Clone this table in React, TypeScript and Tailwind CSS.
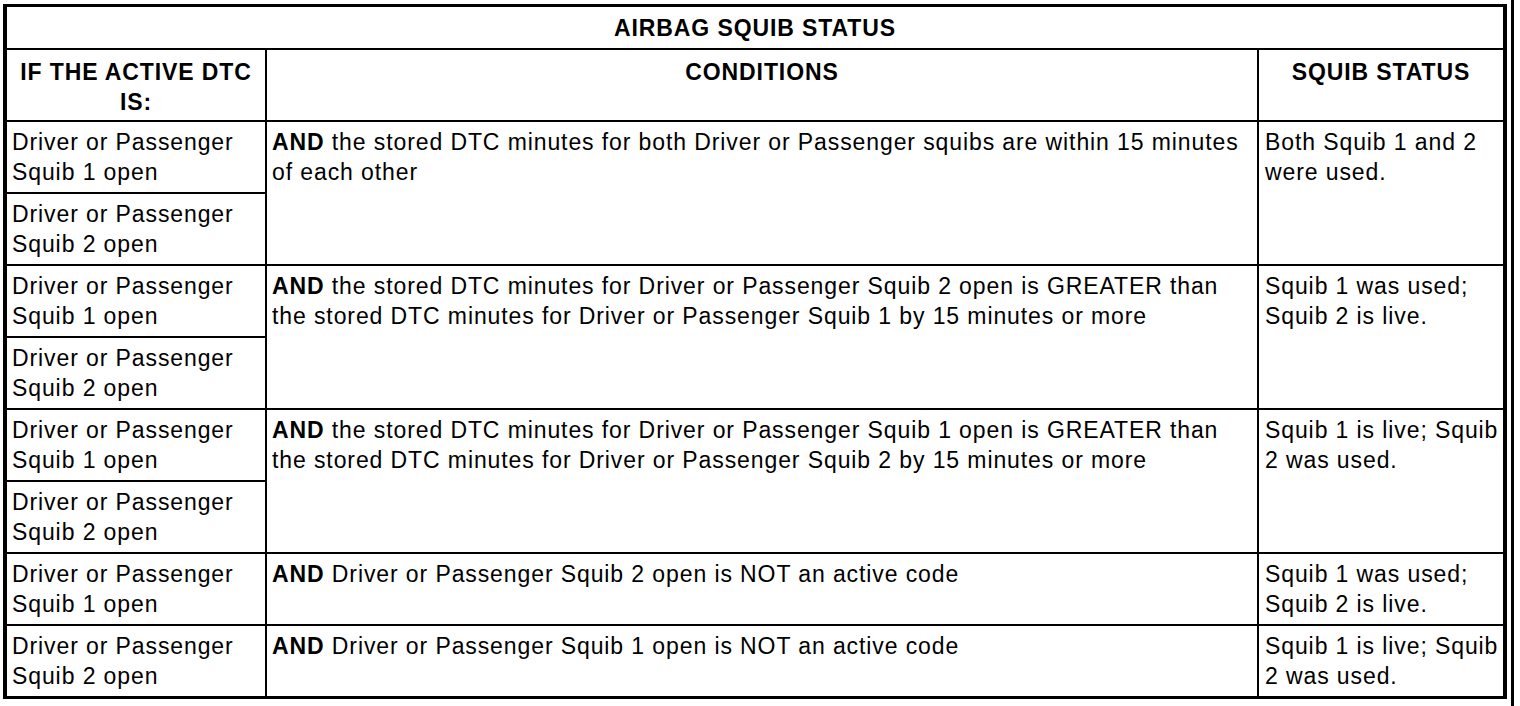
const font = { fontFamily: '"Liberation Sans", Arial, Helvetica, sans-serif' };

type Group = {
  dtcs: string[];
  condition: string[];
  status: string[];
};

const groups: Group[] = [
  {
    dtcs: ["1", "2"],
    condition: [
      "the stored DTC minutes for both Driver or Passenger squibs are within 15 minutes",
      "of each other",
    ],
    status: ["Both Squib 1 and 2", "were used."],
  },
  {
    dtcs: ["1", "2"],
    condition: [
      "the stored DTC minutes for Driver or Passenger Squib 2 open is GREATER than",
      "the stored DTC minutes for Driver or Passenger Squib 1 by 15 minutes or more",
    ],
    status: ["Squib 1 was used;", "Squib 2 is live."],
  },
  {
    dtcs: ["1", "2"],
    condition: [
      "the stored DTC minutes for Driver or Passenger Squib 1 open is GREATER than",
      "the stored DTC minutes for Driver or Passenger Squib 2 by 15 minutes or more",
    ],
    status: ["Squib 1 is live; Squib", "2 was used."],
  },
  {
    dtcs: ["1"],
    condition: ["Driver or Passenger Squib 2 open is NOT an active code"],
    status: ["Squib 1 was used;", "Squib 2 is live."],
  },
  {
    dtcs: ["2"],
    condition: ["Driver or Passenger Squib 1 open is NOT an active code"],
    status: ["Squib 1 is live; Squib", "2 was used."],
  },
];

function Lines({ lines, bold }: { lines: string[]; bold?: boolean }) {
  return (
    <>
      {lines.map((line, index) => (
        <span key={index} className="block whitespace-nowrap">
          {index === 0 && bold ? <b className="font-bold">AND </b> : null}
          {line}
        </span>
      ))}
    </>
  );
}

export default function App() {
  return (
    <div
      className="flex h-[706px] w-[1520px] items-start bg-white text-black"
      style={font}
    >
      <div className="ml-[3px] mt-[4px] border-t-[3px] border-r-4 border-b-[3px] border-l-4 border-black">
        <div className="grid grid-cols-[258px_990px_244px] grid-rows-[41px_70px_repeat(8,70px)] gap-[2px] bg-black text-[23px] leading-[30px] tracking-[0.9px]">
          <div className="col-span-3 flex items-center justify-center bg-white font-bold">
            AIRBAG SQUIB STATUS
          </div>

          <div className="bg-white px-2 pt-[7px] text-center font-bold">
            IF THE ACTIVE DTC
            <br />
            IS:
          </div>
          <div className="bg-white px-2 pt-[7px] text-center font-bold">
            CONDITIONS
          </div>
          <div className="bg-white px-2 pt-[7px] text-center font-bold">
            SQUIB STATUS
          </div>

          {groups.map((group, groupIndex) => {
            const span = group.dtcs.length === 2 ? "row-span-2" : "";

            return group.dtcs.map((squib, index) => (
              <>
                <div
                  key={`${groupIndex}-dtc-${index}`}
                  className="col-start-1 bg-white pl-[5px] pt-[5px]"
                >
                  <span className="block whitespace-nowrap">Driver or Passenger</span>
                  <span className="block whitespace-nowrap">Squib {squib} open</span>
                </div>
                {index === 0 ? (
                  <>
                    <div
                      key={`${groupIndex}-cond`}
                      className={`col-start-2 bg-white pl-[5px] pt-[5px] ${span}`}
                    >
                      <Lines lines={group.condition} bold />
                    </div>
                    <div
                      key={`${groupIndex}-status`}
                      className={`col-start-3 bg-white pl-[6px] pt-[5px] ${span}`}
                    >
                      <Lines lines={group.status} />
                    </div>
                  </>
                ) : null}
              </>
            ));
          })}
        </div>
      </div>

      <div className="ml-[4px] h-[706px] w-[3px] shrink-0 bg-black" />
    </div>
  );
}
